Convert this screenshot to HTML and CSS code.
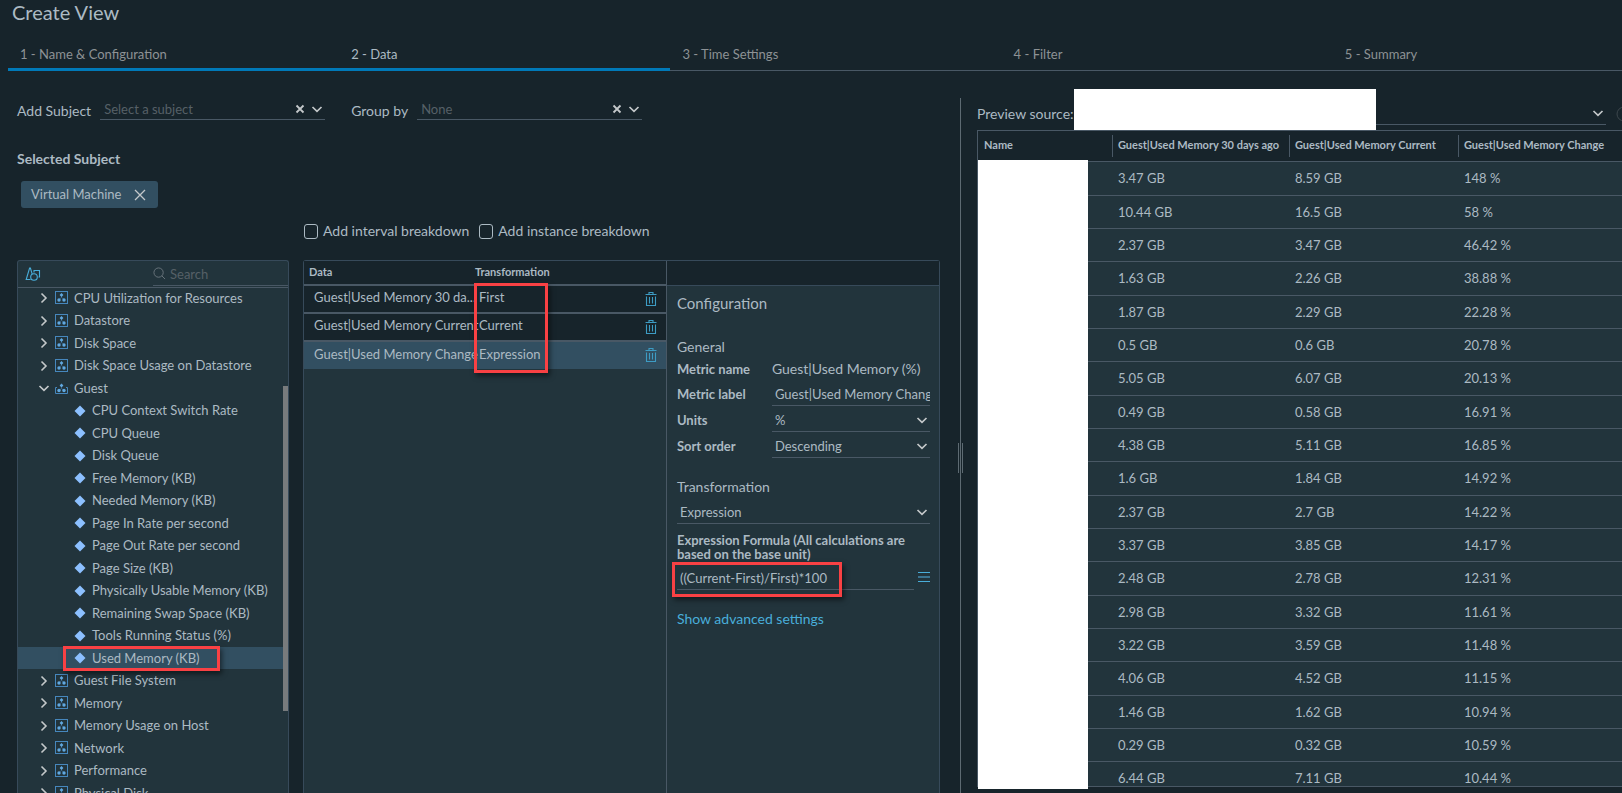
FILE: index.html
```html
<!DOCTYPE html>
<html lang="en">
<head>
    <meta charset="UTF-8">
    <meta name="viewport" content="width=device-width, initial-scale=1.0">
    <title>Create View</title>
    <link rel="stylesheet" href="styles.css">
</head>
<body>

<svg class="sprite" aria-hidden="true">
    <symbol id="icon-down" viewBox="0 0 12 12"><path d="M1.500 4L6 8.300 10.500 4" fill="none" stroke="currentColor" stroke-width="1.7"/></symbol>
    <symbol id="icon-right" viewBox="0 0 12 12"><path d="M3.500 1.500L8 6l-4.500 4.500" fill="none" stroke="currentColor" stroke-width="1.6"/></symbol>
    <symbol id="icon-clear" viewBox="0 0 12 12"><path d="M2.500 2.500l7 7M9.500 2.500l-7 7" fill="none" stroke="currentColor" stroke-width="1.8"/></symbol>
    <symbol id="icon-close" viewBox="0 0 12 12"><path d="M1 1l10 10M11 1L1 11" fill="none" stroke="currentColor" stroke-width="1.3"/></symbol>
    <symbol id="icon-group" viewBox="0 0 14 14">
        <rect x=".5" y=".5" width="12" height="12" fill="none" stroke="#4687bd"/>
        <path d="M6.500 4.500v2M4 8.500l2.500-2 2.500 2" fill="none" stroke="#4687bd" stroke-width=".5"/>
        <path d="M6.500 2.100L8.400 4 6.500 5.900 4.600 4z" fill="#61a8e0"/>
        <circle cx="4" cy="9" r="1.700" fill="#61a8e0"/>
        <circle cx="9" cy="9" r="1.700" fill="#61a8e0"/>
    </symbol>
    <symbol id="icon-group-open" viewBox="0 0 14 14">
        <path d="M2 6.500H.5v6h12v-6H11" fill="none" stroke="#4687bd"/>
        <path d="M6.500 5v2.500M4 9.500l2.500-2 2.500 2" fill="none" stroke="#4687bd" stroke-width=".5"/>
        <path d="M6.500 2.600L8.400 4.500 6.500 6.400 4.600 4.500z" fill="#61a8e0"/>
        <circle cx="4" cy="9.500" r="1.700" fill="#61a8e0"/>
        <circle cx="9" cy="9.500" r="1.700" fill="#61a8e0"/>
    </symbol>
    <symbol id="icon-metric" viewBox="0 0 12 12"><path d="M6 .5L11.500 6 6 11.500.5 6z" fill="#8cc0ff"/></symbol>
    <symbol id="icon-trash" viewBox="0 0 14 16">
        <path d="M1.500 3.500h11M5 3.500V1.500h4v2M2.500 5.500v9h9v-9M5.500 6v6.500M8.500 6v6.500" fill="none" stroke="currentColor" stroke-width="1.1"/>
    </symbol>
    <symbol id="icon-shapes" viewBox="0 0 16 16">
        <path d="M5.500 13.500H1.200L4.600 2h.8L7.200 8.200M9 6.500V4.500h5.500v6.500H13.500" fill="none" stroke="currentColor" stroke-width="1.1"/>
        <circle cx="9" cy="11" r="3.300" fill="none" stroke="currentColor" stroke-width="1.1"/>
    </symbol>
    <symbol id="icon-search" viewBox="0 0 14 14">
        <circle cx="6" cy="6" r="5" fill="none" stroke="currentColor"/>
        <path d="M9.500 9.500l3.500 3.500" stroke="currentColor"/>
    </symbol>
    <symbol id="icon-menu" viewBox="0 0 12 12">
        <path d="M0 1.500h12M0 10.500h12" stroke="#49aeda"/>
        <path d="M0 6h12" stroke="#3a7390" stroke-width="2"/>
    </symbol>
    <symbol id="icon-info" viewBox="0 0 16 16"><circle cx="8" cy="8" r="7" fill="none" stroke="currentColor"/><path d="M8 7v4M8 4v1.500" stroke="currentColor"/></symbol>
</svg>

<h1 class="title">Create View</h1>

<nav class="steps">
    <button class="step done">1 - Name &amp; Configuration</button>
    <button class="step done current">2 - Data</button>
    <button class="step">3 - Time Settings</button>
    <button class="step">4 - Filter</button>
    <button class="step">5 - Summary</button>
</nav>

<main class="content">
    <section class="editor">
        <div class="subject-bar">
            <label for="subject">Add Subject</label>
            <div class="combo">
                <input id="subject" type="text" placeholder="Select a subject">
                <button aria-label="Clear subject"><svg class="icon"><use href="#icon-clear"/></svg></button>
                <button aria-label="Open subjects"><svg class="icon"><use href="#icon-down"/></svg></button>
            </div>
            <label for="group">Group by</label>
            <div class="combo">
                <input id="group" type="text" placeholder="None">
                <button aria-label="Clear group"><svg class="icon"><use href="#icon-clear"/></svg></button>
                <button aria-label="Open groups"><svg class="icon"><use href="#icon-down"/></svg></button>
            </div>
        </div>

        <h2 class="selected-title">Selected Subject</h2>
        <div class="chip">
            <span>Virtual Machine</span>
            <button aria-label="Remove Virtual Machine"><svg class="icon"><use href="#icon-close"/></svg></button>
        </div>

        <div class="breakdowns">
            <label><input type="checkbox">Add interval breakdown</label>
            <label><input type="checkbox">Add instance breakdown</label>
        </div>

        <div class="panels">
            <div class="tree">
                <div class="tree-head">
                    <button class="tree-filter" aria-label="Object types"><svg><use href="#icon-shapes"/></svg></button>
                    <div class="search">
                        <svg><use href="#icon-search"/></svg>
                        <input type="text" placeholder="Search" aria-label="Search">
                    </div>
                </div>
                <div class="tree-body">
                    <ul id="metricTree"></ul>
                    <div class="scroll-thumb"></div>
                </div>
            </div>

            <div class="data-panel">
                <div class="data-list">
                    <table>
                        <thead>
                            <tr>
                                <th class="col-data">Data</th>
                                <th class="col-transform">Transformation</th>
                                <th class="col-action"></th>
                            </tr>
                        </thead>
                        <tbody>
                            <tr>
                                <td>Guest|Used Memory 30 da...</td>
                                <td>First</td>
                                <td><button aria-label="Delete"><svg><use href="#icon-trash"/></svg></button></td>
                            </tr>
                            <tr>
                                <td>Guest|Used Memory Current</td>
                                <td>Current</td>
                                <td><button aria-label="Delete"><svg><use href="#icon-trash"/></svg></button></td>
                            </tr>
                            <tr class="selected">
                                <td>Guest|Used Memory Change</td>
                                <td>Expression</td>
                                <td><button aria-label="Delete"><svg><use href="#icon-trash"/></svg></button></td>
                            </tr>
                        </tbody>
                    </table>
                    <div class="mark mark-transform"></div>
                </div>

                <div class="config">
                    <div class="config-head"></div>
                    <form class="config-form">
                        <h2>Configuration</h2>
                        <h3>General</h3>
                        <div class="field">
                            <span class="field-label">Metric name</span>
                            <span class="field-value">Guest|Used Memory (%)</span>
                        </div>
                        <div class="field">
                            <label class="field-label" for="metricLabel">Metric label</label>
                            <input id="metricLabel" type="text" value="Guest|Used Memory Change">
                        </div>
                        <div class="field">
                            <label class="field-label" for="units">Units</label>
                            <div class="select">
                                <select id="units"><option>%</option></select>
                                <svg class="icon"><use href="#icon-down"/></svg>
                            </div>
                        </div>
                        <div class="field">
                            <label class="field-label" for="sortOrder">Sort order</label>
                            <div class="select">
                                <select id="sortOrder"><option>Descending</option><option>Ascending</option></select>
                                <svg class="icon"><use href="#icon-down"/></svg>
                            </div>
                        </div>
                        <h3 class="transform-title"><label for="transformation">Transformation</label></h3>
                        <div class="select">
                            <select id="transformation"><option>Expression</option></select>
                            <svg class="icon"><use href="#icon-down"/></svg>
                        </div>
                        <label class="formula-label" for="formula">Expression Formula (All calculations are based on the base unit)</label>
                        <div class="formula">
                            <input id="formula" type="text" value="((Current-First)/First)*100">
                            <button type="button" aria-label="Functions"><svg class="icon"><use href="#icon-menu"/></svg></button>
                            <div class="mark mark-formula"></div>
                        </div>
                        <a class="advanced" href="#">Show advanced settings</a>
                    </form>
                </div>
            </div>
        </div>
    </section>

    <div class="splitter"><div class="handle"></div></div>

    <section class="preview">
        <div class="source">
            <label for="source">Preview source:</label>
            <div class="select">
                <select id="source"><option></option></select>
                <svg class="icon"><use href="#icon-down"/></svg>
                <div class="cover-source"></div>
            </div>
            <svg class="info"><use href="#icon-info"/></svg>
        </div>
        <div class="preview-grid">
            <table>
                <thead>
                    <tr>
                        <th class="col-name">Name</th>
                        <th class="col-first">Guest|Used Memory 30 days ago</th>
                        <th class="col-current">Guest|Used Memory Current</th>
                        <th>Guest|Used Memory Change</th>
                    </tr>
                </thead>
                <tbody id="previewRows"></tbody>
            </table>
        </div>
        <div class="cover-names"></div>
    </section>
</main>

<script>
    const before = ["CPU Utilization for Resources", "Datastore", "Disk Space", "Disk Space Usage on Datastore"];
    const guest = ["CPU Context Switch Rate", "CPU Queue", "Disk Queue", "Free Memory (KB)", "Needed Memory (KB)",
        "Page In Rate per second", "Page Out Rate per second", "Page Size (KB)", "Physically Usable Memory (KB)",
        "Remaining Swap Space (KB)", "Tools Running Status (%)", "Used Memory (KB)"];
    const after = ["Guest File System", "Memory", "Memory Usage on Host", "Network", "Performance", "Physical Disk"];

    const rows = [
        ["3.47 GB", "8.59 GB", "148 %"],
        ["10.44 GB", "16.5 GB", "58 %"],
        ["2.37 GB", "3.47 GB", "46.42 %"],
        ["1.63 GB", "2.26 GB", "38.88 %"],
        ["1.87 GB", "2.29 GB", "22.28 %"],
        ["0.5 GB", "0.6 GB", "20.78 %"],
        ["5.05 GB", "6.07 GB", "20.13 %"],
        ["0.49 GB", "0.58 GB", "16.91 %"],
        ["4.38 GB", "5.11 GB", "16.85 %"],
        ["1.6 GB", "1.84 GB", "14.92 %"],
        ["2.37 GB", "2.7 GB", "14.22 %"],
        ["3.37 GB", "3.85 GB", "14.17 %"],
        ["2.48 GB", "2.78 GB", "12.31 %"],
        ["2.98 GB", "3.32 GB", "11.61 %"],
        ["3.22 GB", "3.59 GB", "11.48 %"],
        ["4.06 GB", "4.52 GB", "11.15 %"],
        ["1.46 GB", "1.62 GB", "10.94 %"],
        ["0.29 GB", "0.32 GB", "10.59 %"],
        ["6.44 GB", "7.11 GB", "10.44 %"]
    ];

    function group(name, open) {
        return `<li>
            <svg class="icon"><use href="#icon-${open ? 'down' : 'right'}"/></svg>
            <svg class="type"><use href="#icon-group${open ? '-open' : ''}"/></svg>
            <span>${name}</span>
        </li>`;
    }

    function metric(name) {
        const selected = name === "Used Memory (KB)";
        return `<li class="metric ${selected ? 'selected' : ''}">
            <svg class="icon"><use href="#icon-metric"/></svg>
            <span>${name}</span>
            ${selected ? '<div class="mark mark-metric"></div>' : ''}
        </li>`;
    }

    document.getElementById("metricTree").innerHTML =
        before.map(name => group(name, false)).join('') +
        group("Guest", true) +
        guest.map(metric).join('') +
        after.map(name => group(name, false)).join('');

    document.getElementById("previewRows").innerHTML =
        rows.map(row => `<tr><td></td>${row.map(value => `<td>${value}</td>`).join('')}</tr>`).join('');
</script>

</body>
</html>
```

FILE: styles.css
```css
* {
    box-sizing: border-box;
}

body {
    display: flex;
    flex-direction: column;
    height: 100vh;
    margin: 0;
    overflow: hidden;
    background-color: #17242b;
    color: #acbac3;
    font-family: Lato, "Open Sans", sans-serif;
    font-size: 13px;
    line-height: 16px;
}

h1, h2, h3, ul {
    margin: 0;
    padding: 0;
    font-weight: normal;
}

button, input, select {
    padding: 0;
    border: none;
    border-radius: 0;
    outline: none;
    background: none;
    color: inherit;
    font: inherit;
}

button {
    display: flex;
    align-items: center;
    cursor: pointer;
}

table {
    width: 100%;
    border-collapse: collapse;
    table-layout: fixed;
}

th, td {
    padding: 0;
    text-align: left;
    white-space: nowrap;
}

th {
    padding-bottom: 2px;
    font-size: 11px;
    font-weight: bold;
}

.sprite {
    position: absolute;
    width: 0;
    height: 0;
}

.icon {
    flex: none;
    width: 12px;
    height: 12px;
    color: #c4c8ca;
}

/* red highlight boxes */
.mark {
    position: absolute;
    border: 3px solid #f94144;
    box-shadow: 2px 3px 5px rgba(0, 0, 0, 0.5);
    pointer-events: none;
}

.title {
    padding: 0 12px;
    font-size: 20px;
    line-height: 24px;
}

/* wizard steps run past the right edge */
.steps {
    display: flex;
    flex: none;
    height: 32px;
    margin: 15px -42px 0 8px;
}

.step {
    flex: 1;
    align-items: flex-start;
    padding: 7px 12px;
    box-shadow: inset 0 -1px #495865;
    color: #8d9295;
    font-size: 13px;
}

.step.done {
    box-shadow: inset 0 -3px #0079b8;
}

.step.current {
    color: #acbac3;
}

.content {
    display: flex;
    flex: 1;
    min-height: 0;
}

.editor {
    display: flex;
    flex-direction: column;
    width: 59%;
    padding: 24px 17px 0 17px;
}

.subject-bar {
    display: flex;
    align-items: flex-end;
    gap: 9px;
}

.subject-bar label {
    padding-bottom: 1px;
    font-size: 14px;
}

.combo {
    display: flex;
    align-items: center;
    gap: 5px;
    width: 225px;
    height: 25px;
    margin-right: 17px;
    padding: 4px 2px 0 4px;
    border-bottom: 1px solid #495865;
}

.combo input {
    flex: 1;
    min-width: 0;
}

.combo button {
    padding-bottom: 1px;
}

input::placeholder {
    color: #566067;
    opacity: 1;
}

.selected-title {
    margin-top: 31px;
    font-size: 14px;
    font-weight: bold;
}

.chip {
    display: flex;
    align-items: center;
    align-self: flex-start;
    gap: 13px;
    height: 27px;
    margin: 14px 4px 0;
    padding: 0 12px 0 10px;
    border-radius: 3px;
    background-color: #324f61;
}

.chip span {
    padding-bottom: 1px;
}

.breakdowns {
    display: flex;
    gap: 10px;
    height: 16px;
    margin: 15px 0 0 287px;
    font-size: 14px;
}

.breakdowns label {
    display: flex;
    align-items: center;
    gap: 5px;
}

.breakdowns input {
    width: 14px;
    height: 15px;
    margin: 0;
    border: 1px solid #acbac3;
    border-radius: 3px;
    appearance: none;
}

.panels {
    display: flex;
    flex: 1;
    gap: 14px;
    min-height: 0;
    margin-top: 21px;
}

.tree {
    display: flex;
    flex-direction: column;
    width: 272px;
    border: 1px solid #374a5a;
    border-bottom: none;
    border-radius: 3px 3px 0 0;
    background-color: #22343c;
}

.tree-head {
    display: flex;
    flex: none;
    justify-content: space-between;
    height: 27px;
    border-bottom: 1px solid #495865;
}

.tree-filter {
    padding-left: 7px;
    color: #49aeda;
}

.tree-filter svg {
    width: 16px;
    height: 16px;
}

.search {
    display: flex;
    align-items: center;
    gap: 4px;
    width: 135px;
    height: 25px;
    padding-top: 1px;
    border-bottom: 1px solid #495865;
    color: #6c777e;
}

.search svg {
    flex: none;
    width: 13px;
    height: 13px;
}

.search input {
    width: 100%;
}

.tree-body {
    position: relative;
    flex: 1;
    min-height: 0;
    overflow: hidden;
}

/* list is scrolled slightly under the header */
.tree ul {
    margin-top: -1px;
}

.tree li {
    display: flex;
    position: relative;
    align-items: center;
    height: 22px;
    margin-right: 5px;
    padding-left: 20px;
    white-space: nowrap;
}

.tree li:nth-child(even) {
    height: 23px;
}

.tree li span {
    padding-bottom: 1px;
}

.tree li .type {
    width: 14px;
    height: 14px;
    margin: 0 5px;
}

.tree li.metric {
    gap: 6px;
    padding-left: 56px;
}

.tree li.selected {
    z-index: 1;
    background-color: #324f61;
}

.mark-metric {
    top: -1px;
    left: 45px;
    width: 157px;
    height: 25px;
}

.scroll-thumb {
    position: absolute;
    top: 98px;
    right: 0;
    width: 5px;
    height: 325px;
    background-color: #787b7d;
}

.data-panel {
    display: flex;
    flex: 1;
    border: 1px solid #374a5a;
    border-bottom: none;
    border-radius: 3px 3px 0 0;
    background-color: #22343c;
}

.data-list {
    position: relative;
    width: 57%;
}

.data-list thead tr {
    height: 24px;
    background-color: #17242b;
}

.data-list .col-data {
    width: 171px;
    padding-left: 5px;
}

.data-list .col-action {
    width: 26px;
}

.data-list tbody tr {
    height: 28px;
    border-top: 2px solid #495865;
    background-color: #17242b;
}

.data-list tbody td {
    padding-bottom: 4px;
}

.data-list td:first-child {
    padding-left: 10px;
}

.data-list td:nth-child(2) {
    padding-left: 4px;
}

.data-list td:last-child {
    padding: 0 0 1px 4px;
}

.data-list tbody tr.selected {
    background-color: #324f61;
}

.data-list svg {
    width: 14px;
    height: 16px;
    color: #3d9cc4;
}

.mark-transform {
    top: 22px;
    left: 170px;
    width: 74px;
    height: 90px;
}

.config {
    flex: 1;
    min-width: 0;
    border-left: 1px solid #495865;
}

.config-head {
    height: 25px;
    border-bottom: 1px solid #374a5a;
    background-color: #17242b;
}

.config-form {
    padding: 8px 9px 0 10px;
}

.config-form h2 {
    font-size: 15px;
    line-height: 18px;
}

.config-form h3 {
    margin-top: 26px;
    font-size: 14px;
    line-height: 18px;
}

.config-form .transform-title {
    margin: 19px 0 5px;
}

.field {
    display: flex;
    align-items: center;
    height: 26px;
}

h3 + .field {
    height: 25px;
}

.field-label {
    flex: none;
    width: 95px;
    font-weight: bold;
}

.field-value {
    font-size: 14px;
}

.field input {
    flex: 1;
    min-width: 0;
    height: 23px;
    padding-left: 3px;
    border-bottom: 1px solid #495865;
}

.select {
    position: relative;
    flex: 1;
    height: 23px;
    border-bottom: 1px solid #495865;
}

.select select {
    width: 100%;
    height: 22px;
    padding-left: 3px;
    appearance: none;
}

.select .icon {
    position: absolute;
    top: 5px;
    right: 2px;
    pointer-events: none;
}

.formula-label {
    display: block;
    margin: 9px 0 6px;
    font-weight: bold;
    line-height: 14px;
}

.formula {
    display: flex;
    position: relative;
    gap: 4px;
}

.formula input {
    flex: 1;
    min-width: 0;
    height: 23px;
    padding-left: 3px;
    border-bottom: 1px solid #495865;
}

.formula button {
    height: 20px;
}

.mark-formula {
    top: -5px;
    left: -5px;
    width: 170px;
    height: 35px;
}

.advanced {
    display: inline-block;
    margin-top: 21px;
    color: #49aeda;
    font-size: 14px;
    text-decoration: none;
}

.splitter {
    position: relative;
    width: 6px;
    margin-top: 27px;
    background: linear-gradient(#5d6a72, #5d6a72) 3px 0 / 1px 100% no-repeat;
}

.handle {
    position: absolute;
    top: calc(50% - 3px);
    left: 1px;
    width: 5px;
    height: 30px;
    border: solid #5d6a72;
    border-width: 0 1px;
}

.preview {
    position: relative;
    display: flex;
    flex: 1;
    flex-direction: column;
    min-width: 0;
    padding: 28px 0 6px 14px;
}

.source {
    display: flex;
    flex: none;
    align-items: center;
    height: 29px;
    margin: 0 -10px 2px 0;
}

.source label {
    font-size: 14px;
}

.source .select {
    margin: 0 10px 0 0;
}

.info {
    flex: none;
    width: 16px;
    height: 16px;
    color: #3c464c;
}

.cover-source {
    position: absolute;
    top: -13px;
    left: 0;
    width: 302px;
    height: 41px;
    background-color: #fff;
}

.preview-grid {
    flex: 1;
    min-height: 0;
    overflow: hidden;
    border: solid #495865;
    border-width: 1px 0 1px 1px;
}

.preview-grid thead tr {
    height: 30px;
}

.preview-grid th {
    padding: 0 0 1px 6px;
    background: linear-gradient(#495865, #495865) left center / 1px 22px no-repeat;
}

.preview-grid th.col-name {
    width: 134px;
    background: none;
}

.preview-grid .col-first {
    width: 177px;
}

.preview-grid .col-current {
    width: 169px;
}

.preview-grid tbody tr {
    height: 33px;
    border-top: 1px solid #495865;
    background-color: #22343c;
}

.preview-grid tbody tr:nth-child(3n + 1) {
    height: 34px;
}

.preview-grid td {
    padding-left: 6px;
}

.cover-names {
    position: absolute;
    top: 89px;
    bottom: 4px;
    left: 15px;
    width: 110px;
    background-color: #fff;
}
```
